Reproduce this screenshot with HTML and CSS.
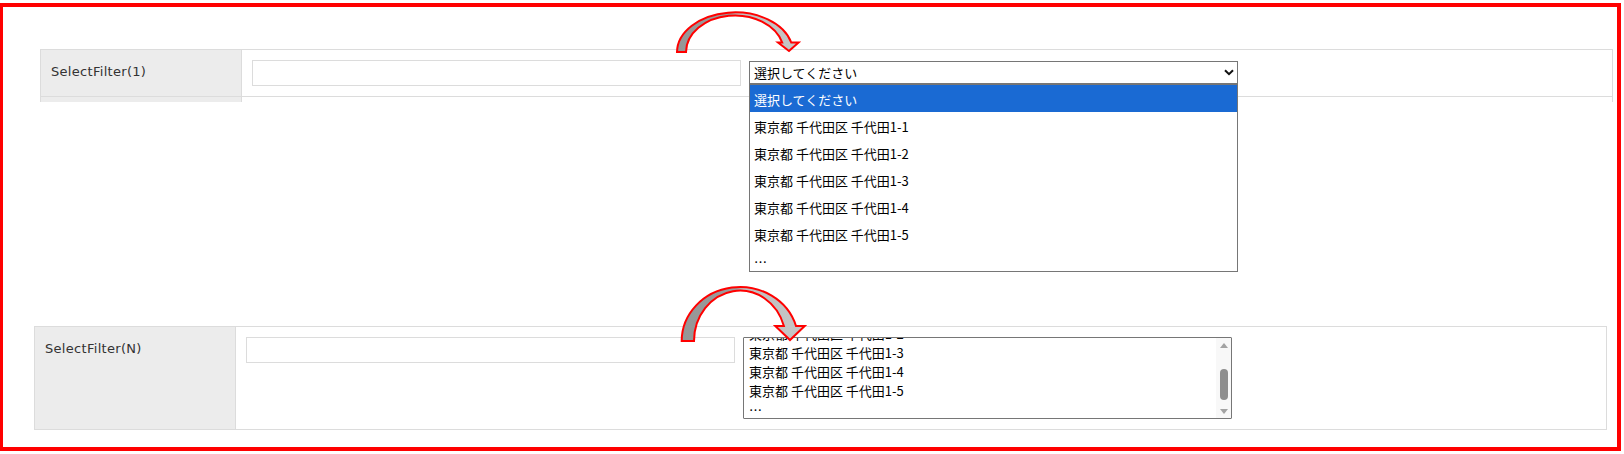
FILE: index.html
```html
<!DOCTYPE html>
<html lang="ja">
<head>
    <meta charset="UTF-8">
    <meta name="viewport" content="width=device-width, initial-scale=1.0">
    <title>SelectFilter</title>
    <link rel="stylesheet" href="styles.css">
</head>
<body>
    <div class="frame">
        <!-- SelectFilter(1) : ドロップダウンを開いた状態 -->
        <section class="filter filter-first">
            <div class="filter-row">
                <div class="filter-label">SelectFilter(1)</div>
                <div class="filter-value">
                    <input type="text" class="filter-input">
                    <div class="select-box">
                        <div class="select-current">
                            <span>選択してください</span>
                            <svg class="chevron" width="10" height="7" viewBox="0 0 10 7">
                                <polyline points="1,1.2 5,5.2 9,1.2" fill="none" stroke="#111" stroke-width="2"/>
                            </svg>
                        </div>
                        <ul class="select-popup">
                            <li class="selected">選択してください</li>
                            <li>東京都 千代田区 千代田1-1</li>
                            <li>東京都 千代田区 千代田1-2</li>
                            <li>東京都 千代田区 千代田1-3</li>
                            <li>東京都 千代田区 千代田1-4</li>
                            <li>東京都 千代田区 千代田1-5</li>
                            <li>…</li>
                        </ul>
                    </div>
                </div>
            </div>
            <div class="filter-stub">
                <div class="stub-label"></div>
                <div></div>
            </div>
        </section>

        <!-- SelectFilter(N) : リストボックス表示 -->
        <section class="filter filter-second">
            <div class="filter-row">
                <div class="filter-label">SelectFilter(N)</div>
                <div class="filter-value">
                    <input type="text" class="filter-input">
                    <div class="listbox">
                        <div class="listbox-options">
                            <ul>
                                <li>選択してください</li>
                                <li>東京都 千代田区 千代田1-1</li>
                                <li>東京都 千代田区 千代田1-2</li>
                                <li>東京都 千代田区 千代田1-3</li>
                                <li>東京都 千代田区 千代田1-4</li>
                                <li>東京都 千代田区 千代田1-5</li>
                                <li>…</li>
                            </ul>
                        </div>
                        <div class="scrollbar">
                            <div class="sb-button"><span class="sb-up"></span></div>
                            <div class="sb-track"><span class="sb-thumb"></span></div>
                            <div class="sb-button"><span class="sb-down"></span></div>
                        </div>
                    </div>
                </div>
            </div>
        </section>
    </div>

    <!-- 注釈の矢印 -->
    <svg class="arrows" width="1624" height="454" viewBox="0 0 1624 454">
        <defs>
            <linearGradient id="arrowTop" gradientUnits="userSpaceOnUse" x1="677" y1="0" x2="799" y2="0">
                <stop offset="0" stop-color="#969696"/>
                <stop offset="0.44" stop-color="#9c9c9c"/>
                <stop offset="0.5" stop-color="#bebebe"/>
                <stop offset="1" stop-color="#c6c6c6"/>
            </linearGradient>
            <linearGradient id="arrowBottom" gradientUnits="userSpaceOnUse" x1="682" y1="0" x2="805" y2="0">
                <stop offset="0" stop-color="#969696"/>
                <stop offset="0.44" stop-color="#9c9c9c"/>
                <stop offset="0.5" stop-color="#bebebe"/>
                <stop offset="1" stop-color="#c6c6c6"/>
            </linearGradient>
        </defs>
        <path d="M 677 52 A 58 40 0 0 1 791.2 42.5 L 798.6 42.5 L 789 51 L 778 42.5 L 782.2 42.5 A 49 37 0 0 0 686 52 Z"
              fill="url(#arrowTop)" stroke="#ff0000" stroke-width="2"/>
        <path d="M 681.7 341 A 58.3 54 0 0 1 796 326 L 804.7 326 L 790 340 L 775.3 326 L 783.9 326 A 46 50.5 0 0 0 694 341 Z"
              fill="url(#arrowBottom)" stroke="#ff0000" stroke-width="2"/>
    </svg>
</body>
</html>
```

FILE: styles.css
```css
:root {
    --border-color: #dcdcdc;
    --label-bg: #ececec;
    --label-color: #333333;
    --control-border: #767676;
    --highlight: #1a6ad3;
    --frame-red: #ff0000;
}

* {
    box-sizing: border-box;
}

body {
    margin: 0;
    background-color: #ffffff;
    font-family: "Noto Sans CJK JP", sans-serif;
    font-size: 13px;
    color: #000000;
}

.frame {
    height: 448px;
    margin: 3px 3px 0 -1px;
    border: 4px solid var(--frame-red);
}

.filter {
    width: 1573px;
    border: 1px solid var(--border-color);
    border-bottom: none;
}

.filter-first {
    margin: 42px 0 0 37px;
}

.filter-second {
    margin: 224px 0 0 31px;
}

.filter-row,
.filter-stub {
    display: grid;
    grid-template-columns: 201px 1fr;
}

.filter-row {
    border-bottom: 1px solid var(--border-color);
}

.filter-stub {
    grid-template-rows: 5px;
    height: 5px;
}

.stub-label {
    background-color: var(--label-bg);
    border-right: 1px solid var(--border-color);
}

.filter-label {
    padding: 12px 10px;
    background-color: var(--label-bg);
    border-right: 1px solid var(--border-color);
    font-family: "DejaVu Sans", "Noto Sans CJK JP", sans-serif;
    font-size: 13px;
    line-height: 20px;
    letter-spacing: 0.3px;
    color: var(--label-color);
}

.filter-value {
    display: flex;
    align-items: flex-start;
    gap: 8px;
    padding: 10px;
}

.filter-input {
    width: 489px;
    height: 26px;
    margin: 0;
    padding: 0 6px;
    border: 1px solid var(--border-color);
    background-color: #ffffff;
    outline: none;
    font: inherit;
}

/* 閉じた状態の select と開いたポップアップ */
.select-box {
    position: relative;
    width: 489px;
    margin-top: 1px;
}

.select-current {
    display: flex;
    align-items: center;
    justify-content: space-between;
    height: 23px;
    padding: 0 3px 0 4px;
    border: 1px solid var(--control-border);
    background-color: #ffffff;
    line-height: 21px;
}

.chevron {
    display: block;
}

.select-popup {
    position: absolute;
    top: 100%;
    left: 0;
    width: 100%;
    height: 188px;
    margin: 0;
    padding: 0;
    list-style: none;
    overflow: hidden;
    border: 1px solid var(--control-border);
    background-color: #ffffff;
    z-index: 2;
}

.select-popup li {
    height: 27px;
    padding: 2px 4px 0;
    line-height: 25px;
    white-space: nowrap;
}

.select-popup li.selected {
    background-color: var(--highlight);
    color: #ffffff;
}

/* size 指定のリストボックス（スクロール途中） */
.listbox {
    display: flex;
    width: 489px;
    height: 82px;
    border: 1px solid var(--control-border);
    border-radius: 1px;
    background-color: #ffffff;
}

.listbox-options {
    flex: 1;
    overflow: hidden;
}

.listbox-options ul {
    margin: -52px 0 0;
    padding: 0;
    list-style: none;
}

.listbox-options li {
    height: 19px;
    padding-left: 5px;
    line-height: 19px;
    white-space: nowrap;
}

.scrollbar {
    display: flex;
    flex-direction: column;
    width: 15px;
    background-color: #f8f8f8;
}

.sb-button {
    display: flex;
    align-items: center;
    justify-content: center;
    height: 14px;
}

.sb-up,
.sb-down {
    width: 0;
    height: 0;
    border-left: 4px solid transparent;
    border-right: 4px solid transparent;
}

.sb-up {
    border-bottom: 5px solid #a3a3a3;
}

.sb-down {
    border-top: 5px solid #a3a3a3;
}

.sb-track {
    display: flex;
    justify-content: center;
    flex: 1;
    padding-top: 17px;
}

.sb-thumb {
    width: 8px;
    height: 31px;
    border-radius: 4px;
    background-color: #8e8e8e;
}

.arrows {
    position: absolute;
    top: 0;
    left: 0;
    z-index: 3;
    pointer-events: none;
}
```
